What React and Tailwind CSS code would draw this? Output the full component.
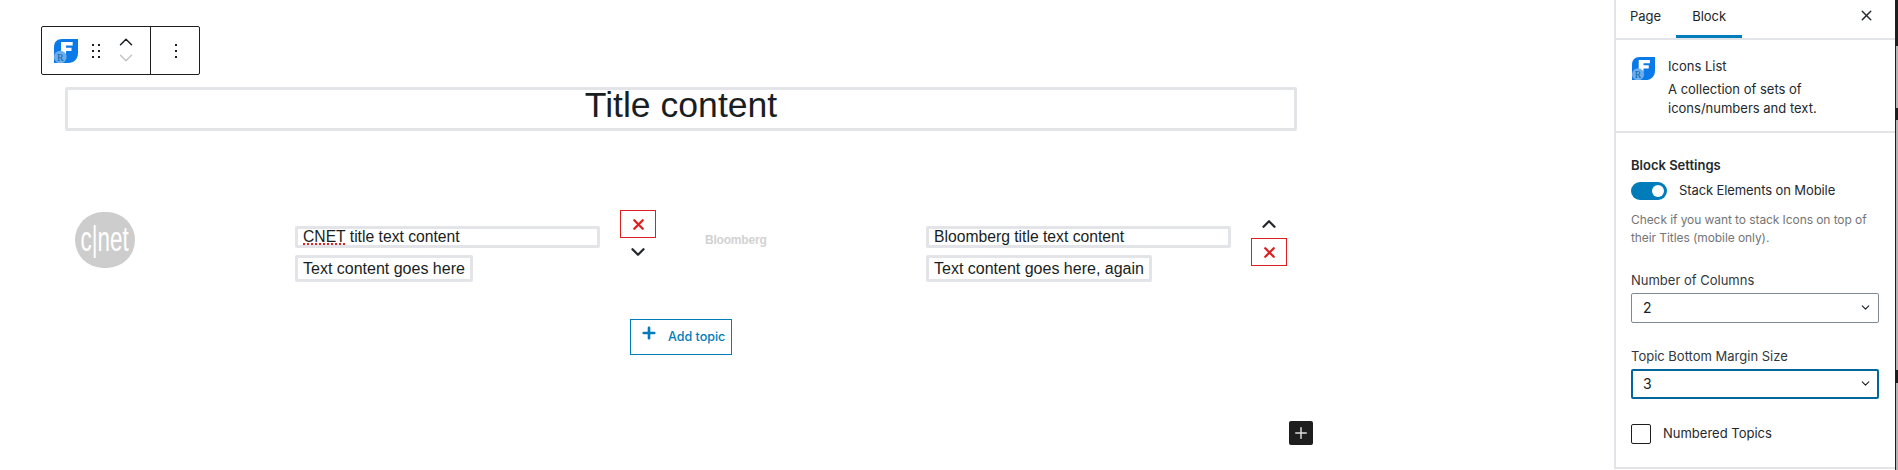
import React from 'react';
import { ChevronDown, ChevronUp, Plus, X } from 'lucide-react';

const FormLogo = ({ className }) => (
  <svg viewBox="0 0 24 24" className={className}>
    <path d="M8 0H24V14C24 20 20 24 14 24H0V8C0 3 3 0 8 0Z" fill="#0a7ae8" />
    <path d="M7 3H18.7V6.5H12V8.7H17.5V12H12V15H7Z" fill="#fff" />
    <circle cx="6.3" cy="18" r="6.3" fill="#6fadec" />
    <text x="6.3" y="22" textAnchor="middle" fontSize="10" fontFamily="'Liberation Serif', serif" fill="#0a6aa8">R</text>
  </svg>
);

const EditBox = ({ children, className }) => (
  <div className={`border-[3px] border-[#e2e4e7] rounded-[2px] px-[5px] text-[#191e23] whitespace-nowrap ${className}`}>
    {children}
  </div>
);

const RemoveButton = () => (
  <button className="w-[36px] h-[28px] border border-[#dc2020] flex items-center justify-center text-[#dc2020]">
    <X size={17} strokeWidth={3.2} />
  </button>
);

const Field = ({ label, value, focused, className }) => (
  <div className={className}>
    <div className="text-[13px] leading-[19px] text-[#32373c]">{label}</div>
    <div className={`mt-[3px] w-[248px] h-[30px] rounded-[2px] flex items-center justify-between text-[#191e23] text-[14px] ${focused ? 'border-2 border-[#00669b] pl-[10px] pr-[5px]' : 'border border-[#7e8993] pl-[11px] pr-[6px]'}`}>
      <span>{value}</span>
      <ChevronDown size={13} strokeWidth={2} />
    </div>
  </div>
);

const Topic = ({ logo, title, text, controls }) => (
  <div className="pl-[10px] flex items-start">
    <div className="w-[220px] mt-[2px]">{logo}</div>
    <div className="w-[305px] mt-[16px] flex flex-col items-start gap-[7px]">
      <EditBox className="w-full h-[22px] leading-[16px] text-[15.7px]">{title}</EditBox>
      <EditBox className="h-[27px] leading-[21px] text-[16px]">{text}</EditBox>
    </div>
    <div className="ml-[20px] w-[36px] flex flex-col items-center">{controls}</div>
  </div>
);

const CnetLogo = () => (
  <div className="w-[60px] h-[56px] rounded-full bg-[#cdcdcd] flex items-center justify-center text-white text-[35px] leading-none overflow-hidden">
    <span className="scale-x-[0.64] pb-[4px]">c|net</span>
  </div>
);

const BloombergLogo = () => (
  <div className="h-[56px] -ml-[1px] flex items-center text-[#d2d2d2] text-[12px] font-bold tracking-[-0.2px]">Bloomberg</div>
);

export default function App() {
  return (
    <div className="w-[1898px] h-[470px] flex overflow-hidden bg-white font-['Liberation_Sans',sans-serif]">
      <main className="w-[1614px] pt-[26px]">
        {/* block toolbar */}
        <div className="ml-[41px] w-[159px] h-[49px] border border-[#1e1e1e] rounded-[2px] flex items-center">
          <div className="w-[109px] h-full flex items-center pl-[12px] border-r border-[#1e1e1e]">
            <FormLogo className="w-[24px] h-[24px]" />
            <svg viewBox="0 0 8 14" className="ml-[14px] w-[8px] h-[14px]" fill="#191e23">
              <rect x="0" y="0" width="2" height="2" /><rect x="6" y="0" width="2" height="2" />
              <rect x="0" y="6" width="2" height="2" /><rect x="6" y="6" width="2" height="2" />
              <rect x="0" y="12" width="2" height="2" /><rect x="6" y="12" width="2" height="2" />
            </svg>
            <div className="ml-[15px] pb-[2px] flex flex-col items-center">
              <ChevronUp size={22} strokeWidth={1.6} className="-my-[3px] text-[#191e23]" />
              <ChevronDown size={22} strokeWidth={1.6} className="-my-[3px] text-[#c4c4c4]" />
            </div>
          </div>
          <svg viewBox="0 0 2 14" className="ml-[24px] w-[2px] h-[14px]" fill="#191e23">
            <rect width="2" height="2" y="0" /><rect width="2" height="2" y="6" /><rect width="2" height="2" y="12" />
          </svg>
        </div>

        <div className="mt-[12px] ml-[65px] w-[1232px] h-[44px] pb-[6px] border-[3px] border-[#e2e4e7] rounded-[2px] flex items-center justify-center text-[35.6px] text-[#191e23]">
          Title content
        </div>

        <div className="mt-[79px] ml-[65px] w-[1262px] grid grid-cols-2">
          <Topic
            logo={<CnetLogo />}
            title={<><span className="underline decoration-dotted decoration-[#d22] decoration-2">CNET</span> title text content</>}
            text="Text content goes here"
            controls={<><RemoveButton /><ChevronDown size={22} strokeWidth={2.5} className="mt-[3px] text-[#23282d]" /></>}
          />
          <Topic
            logo={<BloombergLogo />}
            title="Bloomberg title text content"
            text="Text content goes here, again"
            controls={<><div className="h-[28px] flex items-end"><ChevronUp size={22} strokeWidth={2.5} className="mb-[3px] text-[#23282d]" /></div><RemoveButton /></>}
          />
        </div>

        <button className="mt-[37px] ml-[630px] w-[102px] h-[36px] border border-[#007cba] flex items-start text-[#007cba] text-[12.5px] font-medium font-['Inter',sans-serif]">
          <Plus size={18} strokeWidth={3.5} className="ml-[9px] mt-[4px]" />
          <span className="ml-[10px] mt-[9px] leading-[15px]">Add topic</span>
        </button>

        <button className="mt-[66px] ml-[1289px] w-[24px] h-[24px] bg-[#1e1e1e] rounded-[2px] flex items-center justify-center text-[#dcdcdc]">
          <Plus size={18} strokeWidth={2} />
        </button>
      </main>

      <aside className="w-[281px] h-[469px] border-l-2 border-b-2 border-[#e2e4e7] text-[13px] text-[#23282d] font-['Inter',sans-serif]">
        <div className="h-[40px] border-b-2 border-[#e2e4e7] flex items-start">
          <span className="ml-[14px] mt-[7px] leading-[19px]">Page</span>
          <span className="ml-[15px] w-[66px] h-[38px] pt-[7px] leading-[19px] text-center border-b-[3px] border-[#007cba] text-[#191e23]">Block</span>
          <X size={17} strokeWidth={2} className="ml-auto mr-[20px] mt-[7px]" />
        </div>

        <div className="h-[93px] border-b-2 border-[#e2e4e7] flex items-start pl-[16px] pt-[17px]">
          <FormLogo className="w-[23px] h-[23px]" />
          <div className="ml-[13px] leading-[19px]">
            <div>Icons List</div>
            <div className="mt-[4px]">A collection of sets of<br />icons/numbers and text.</div>
          </div>
        </div>

        <div className="pl-[15px] pt-[23px]">
          <div className="font-semibold leading-[19px]">Block Settings</div>
          <div className="mt-[6px] flex items-center">
            <div className="w-[36px] h-[18px] rounded-full bg-[#007cba] flex items-center justify-end pr-[3px]">
              <div className="w-[12px] h-[12px] rounded-full bg-white" />
            </div>
            <span className="ml-[12px] tracking-[-0.1px]">Stack Elements on Mobile</span>
          </div>
          <div className="mt-[10px] text-[12px] leading-[18px] text-[#757575] tracking-[-0.08px]">
            Check if you want to stack Icons on top of<br />their Titles (mobile only).
          </div>
          <Field className="mt-[24px]" label="Number of Columns" value="2" />
          <Field className="mt-[24px]" label="Topic Bottom Margin Size" value="3" focused />
          <div className="mt-[25px] flex items-center">
            <div className="w-[20px] h-[20px] border border-[#1e1e1e] rounded-[2px]" />
            <span className="ml-[12px]">Numbered Topics</span>
          </div>
        </div>
      </aside>

      {/* edge of the next window */}
      <div className="w-[3px] h-full border-l border-[#1e1e1e] bg-[#b4b4b4] flex flex-col">
        <div className="h-[46px] bg-[#1e1e1e]" />
        <div className="mt-[62px] h-[12px] bg-[#1e1e1e]" />
        <div className="mt-[250px] h-[13px] bg-[#1e1e1e]" />
      </div>
    </div>
  );
}
